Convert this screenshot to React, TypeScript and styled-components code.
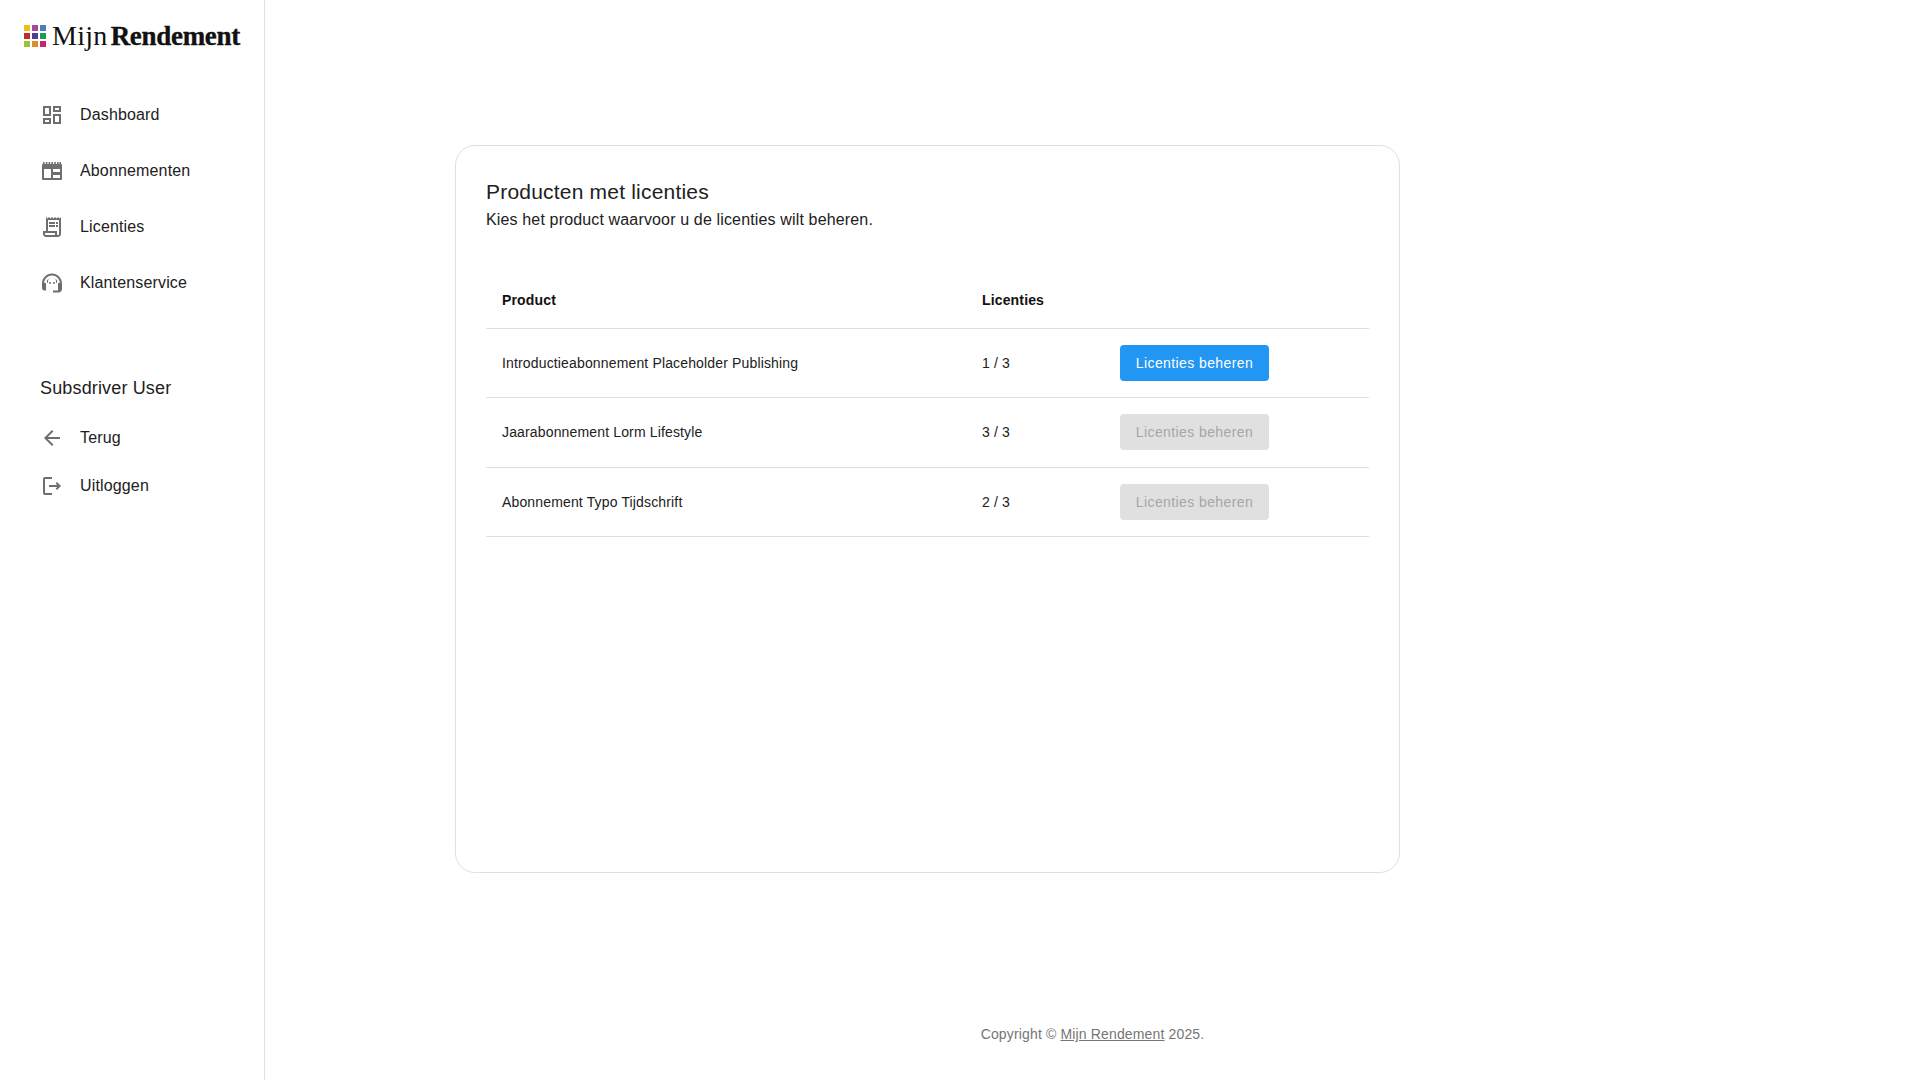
import React from "react";
import styled, { createGlobalStyle } from "styled-components";

const Global = createGlobalStyle`
  html, body { margin: 0; padding: 0; background: #fff; }
  body { font-family: "Liberation Sans", Arial, sans-serif; color: #212121; letter-spacing: 0.15px; }
  * { box-sizing: border-box; }
`;

const Shell = styled.div`
  display: flex;
  width: 100%;
  height: 1080px;
  overflow: hidden;
`;

const Sidebar = styled.aside`
  flex: 0 0 265px;
  height: 100%;
  border-right: 1px solid #e0e0e0;
  display: flex;
  flex-direction: column;
`;

const LogoRow = styled.div`
  display: flex;
  align-items: center;
  gap: 6px;
  height: 36px;
  margin: 18px 0 0 24px;
`;

const LogoGrid = styled.svg`
  width: 22px;
  height: 22px;
  flex: none;
`;

const LogoText = styled.div`
  font-family: "Liberation Serif", "Times New Roman", serif;
  font-size: 28px;
  line-height: 36px;
  letter-spacing: 0.3px;
  color: #111;
  white-space: nowrap;
`;

const LogoStrong = styled.span`
  font-size: 27px;
  font-weight: 700;
  margin-left: 3px;
  letter-spacing: -0.3px;
  -webkit-text-stroke: 0.35px #111;
`;

const Nav = styled.nav`
  display: flex;
  flex-direction: column;
  margin-top: 33px;
`;

const NavItem = styled.a<{ $h?: number }>`
  display: flex;
  align-items: center;
  height: ${(p) => p.$h ?? 56}px;
  padding-left: 40px;
  gap: 16px;
  font-size: 16px;
  color: #212121;
  text-decoration: none;
  svg { width: 24px; height: 24px; flex: none; fill: #6e6e6e; }
`;

const UserName = styled.div`
  margin: 65px 0 0 40px;
  font-size: 18px;
  line-height: 24px;
  color: #212121;
`;

const SubNav = styled.nav`
  display: flex;
  flex-direction: column;
  margin-top: 14px;
`;

const Main = styled.main`
  flex: 1;
  display: flex;
  flex-direction: column;
  min-width: 0;
`;

const Content = styled.div`
  flex: 1;
  padding: 145px 0 0 190px;
`;

const Card = styled.section`
  width: 945px;
  height: 728px;
  border: 1px solid #e0e0e0;
  border-radius: 20px;
  padding: 30px;
`;

const Title = styled.h1`
  margin: 2px 0 0;
  font-weight: 400;
  font-size: 21px;
  line-height: 28px;
  letter-spacing: 0.2px;
  color: #212121;
`;

const Subtitle = styled.p`
  margin: 2px 0 0;
  font-size: 16px;
  line-height: 24px;
  color: #212121;
`;

const Table = styled.table`
  width: 883px;
  margin-top: 42px;
  border-collapse: collapse;
  table-layout: fixed;
`;

const HeadCell = styled.th<{ $w: number }>`
  width: ${(p) => p.$w}px;
  height: 54px;
  padding: 0 16px 1px;
  text-align: left;
  font-size: 14px;
  font-weight: 700;
  color: #111;
  border-bottom: 1px solid #e0e0e0;
`;

const Cell = styled.td`
  height: 69.5px;
  padding: 0 16px;
  font-size: 14px;
  color: #212121;
  border-bottom: 1px solid #e0e0e0;
`;

const ManageButton = styled.button<{ $off?: boolean }>`
  display: block;
  width: 149px;
  height: 36px;
  padding: 0;
  border: 0;
  border-radius: 4px;
  font-family: inherit;
  font-size: 14px;
  letter-spacing: 0.4px;
  color: ${(p) => (p.$off ? "#a6a6a6" : "#fff")};
  background: ${(p) => (p.$off ? "#e0e0e0" : "#2196f3")};
`;

const Footer = styled.footer`
  height: 56px;
  text-align: center;
  font-size: 14px;
  line-height: 20px;
  color: #757575;
  a { color: inherit; text-decoration: underline; }
`;

const logoColors = ["#efbb1e", "#a8489a", "#4f7bbd", "#c62a2a", "#4f3d94", "#1f9a55", "#9dbf3c", "#dc8f26", "#cb2371"];

const rows = [
  ["Introductieabonnement Placeholder Publishing", "1 / 3", false],
  ["Jaarabonnement Lorm Lifestyle", "3 / 3", true],
  ["Abonnement Typo Tijdschrift", "2 / 3", true],
] as const;

const IconDashboard = () => (
  <svg viewBox="0 0 24 24"><path d="M19 5v2h-4V5h4M9 5v6H5V5h4m10 8v6h-4v-6h4M9 17v2H5v-2h4M21 3h-8v6h8V3zM11 3H3v10h8V3zm10 8h-8v10h8V11zm-10 4H3v6h8v-6z" /></svg>
);
const IconSubs = () => (
  <svg viewBox="0 0 24 24">
    <path d="M3 3h1.600v2H3zm2.800 0h1.600v2H5.800zm2.800 0h1.600v2H8.600zm2.800 0H13v2h-1.600zm2.800 0h1.600v2h-1.600zm2.800 0h1.600v2H17zm2.400 0H21v2h-1.600z" />
    <path fillRule="evenodd" d="M3 5h18a1 1 0 0 1 1 1v14a1 1 0 0 1-1 1H3a1 1 0 0 1-1-1V6a1 1 0 0 1 1-1zm1 5v9h7v-9zm9 0v3h7v-3zm0 6v3h7v-3z" />
  </svg>
);
const IconLicense = () => (
  <svg viewBox="0 0 24 24"><path d="M19.500 3.500 18 2l-1.500 1.500L15 2l-1.500 1.500L12 2l-1.500 1.500L9 2 7.500 3.500 6 2v14H3v3c0 1.660 1.340 3 3 3h12c1.660 0 3-1.340 3-3V2l-1.500 1.500zM15 20H6c-.55 0-1-.45-1-1v-1h10v2zm4-1c0 .55-.45 1-1 1s-1-.45-1-1v-3H8V5h11v14z" /><path d="M9 7h6v2H9zm7 0h2v2h-2zM9 10h6v2H9zm7 0h2v2h-2z" /></svg>
);
const IconSupport = () => (
  <svg viewBox="0 0 24 24">
    <g transform="translate(0 -1.500)">
      <path fillRule="evenodd" d="M12 4C6.500 4 2 8.500 2 14v4.500C2 19.900 3.100 21 4.500 21H6v-7.500H4.100C4.400 9.300 7.800 6 12 6s7.600 3.300 7.900 7.500H18V21h-5v2h5.500c1.900 0 3.500-1.600 3.500-3.500V14c0-5.500-4.500-10-10-10z" />
      <path fillRule="evenodd" d="M12 8a6 6 0 0 0-5 2.700V13l1 .5V12a4 4 0 0 1 8 0v1.500l1-.5v-2.300A6 6 0 0 0 12 8z" />
      <circle cx="10" cy="13.500" r="1" />
      <circle cx="14" cy="13.500" r="1" />
    </g>
  </svg>
);
const IconBack = () => (
  <svg viewBox="0 0 24 24"><path d="M20 11H7.830l5.590-5.590L12 4l-8 8 8 8 1.410-1.410L7.830 13H20z" /></svg>
);
const IconLogout = () => (
  <svg viewBox="0 0 24 24"><path d="M5 5h7V3H5a2 2 0 0 0-2 2v14a2 2 0 0 0 2 2h7v-2H5z" /><path d="m17 8-1.400 1.400 1.600 1.600H9v2h8.200l-1.600 1.600L17 16l4-4z" /></svg>
);

export default function App() {
  return (
    <>
      <Global />
      <Shell>
        <Sidebar>
          <LogoRow>
            <LogoGrid viewBox="0 0 22 22">
              {logoColors.map((c, i) => (
                <rect key={c} x={(i % 3) * 8} y={Math.floor(i / 3) * 8} width="6" height="6" fill={c} />
              ))}
            </LogoGrid>
            <LogoText>
              Mijn<LogoStrong>Rendement</LogoStrong>
            </LogoText>
          </LogoRow>
          <Nav>
            <NavItem href="#"><IconDashboard />Dashboard</NavItem>
            <NavItem href="#"><IconSubs />Abonnementen</NavItem>
            <NavItem href="#"><IconLicense />Licenties</NavItem>
            <NavItem href="#"><IconSupport />Klantenservice</NavItem>
          </Nav>
          <UserName>Subsdriver User</UserName>
          <SubNav>
            <NavItem $h={48} href="#"><IconBack />Terug</NavItem>
            <NavItem $h={48} href="#"><IconLogout />Uitloggen</NavItem>
          </SubNav>
        </Sidebar>
        <Main>
          <Content>
            <Card>
              <Title>Producten met licenties</Title>
              <Subtitle>Kies het product waarvoor u de licenties wilt beheren.</Subtitle>
              <Table>
                <thead>
                  <tr>
                    <HeadCell $w={480}>Product</HeadCell>
                    <HeadCell $w={138}>Licenties</HeadCell>
                    <HeadCell $w={265} />
                  </tr>
                </thead>
                <tbody>
                  {rows.map(([name, count, off]) => (
                    <tr key={name}>
                      <Cell>{name}</Cell>
                      <Cell>{count}</Cell>
                      <Cell>
                        <ManageButton $off={off} disabled={off}>Licenties beheren</ManageButton>
                      </Cell>
                    </tr>
                  ))}
                </tbody>
              </Table>
            </Card>
          </Content>
          <Footer>
            Copyright © <a href="#">Mijn Rendement</a> 2025.
          </Footer>
        </Main>
      </Shell>
    </>
  );
}
